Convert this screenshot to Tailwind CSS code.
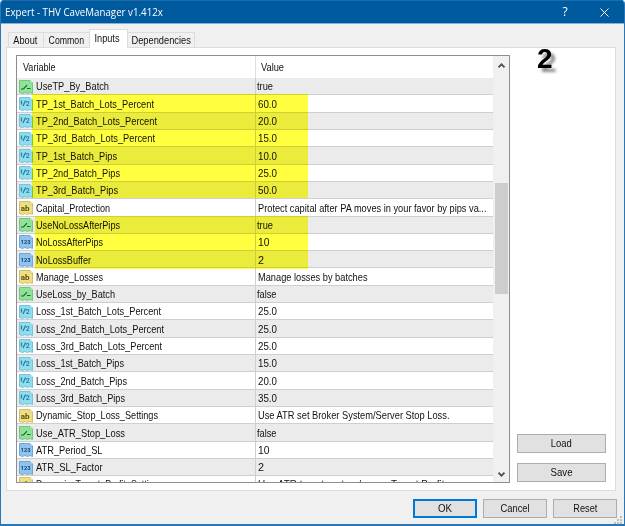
<!DOCTYPE html>
<html lang="en">
<head>
  <meta charset="UTF-8">
  <meta name="viewport" content="width=device-width, initial-scale=1.0">
  <title>Expert - THV CaveManager v1.412x</title>
  <script src="https://cdn.jsdelivr.net/npm/@tailwindcss/browser@4"></script>
</head>
<body class="bg-white overflow-hidden font-['Liberation_Sans',sans-serif] text-[11px] text-[#111]">
  <div class="relative w-[625px] h-[526px] flex flex-col bg-[#f0f0f0] border-l border-r border-b-2 border-[#2a77b8] rounded-t-[4px] overflow-hidden">
    <header class="h-6 shrink-0 bg-[#005a9e] border-t border-[#1a6eb0] border-b border-b-[#7fb2de] flex items-center text-white">
      <h1 class="pl-[4px] flex-1 font-['Open_Sans',sans-serif] text-[11px]"><span class="inline-block origin-left scale-x-[0.885]">Expert - THV CaveManager v1.412x</span></h1>
      <span class="w-[38px] text-center font-['Open_Sans',sans-serif] text-[12px]">?</span>
      <span class="w-[40px] flex justify-center">
        <svg class="w-[9px] h-[9px]" viewBox="0 0 9 9" fill="none" stroke="#fff" stroke-width="1"><path d="M.5 .5l8 8M8.5 .5l-8 8"/></svg>
      </span>
    </header>

    <nav class="relative z-10 flex items-end h-6 pl-[7px] shrink-0">
      <span class="h-4 w-[36px] border border-b-0 border-[#dcdcdc] flex items-center justify-center pr-[2px]"><span data-width="24">About</span></span>
      <span class="h-4 w-[45px] border-t border-[#dcdcdc] flex items-center justify-center"><span data-width="35.5">Common</span></span>
      <span class="h-[19px] w-[39px] bg-white border border-b-0 border-[#dcdcdc] flex items-center justify-center pb-0.5 pr-[3px]"><span data-width="25">Inputs</span></span>
      <span class="h-4 w-[67px] border border-l-0 border-b-0 border-[#dcdcdc] flex items-center justify-center"><span data-width="59.5">Dependencies</span></span>
    </nav>

    <main class="ml-[5px] w-[610px] h-[444px] shrink-0 -mt-px bg-white border border-[#dcdcdc] flex pt-[7px] pl-[9px]">
      <section class="relative w-[494px] h-[428px] border border-[#8b8e96] flex overflow-hidden">
        <div class="w-[476px] shrink-0">
          <div class="h-[22px] flex items-center">
            <span class="w-[239px] h-full pl-[6px] pt-px flex items-center border-r border-[#e0e0e0]"><span class="origin-left" data-width="32.5">Variable</span></span>
            <span class="pl-[5px] pt-px"><span class="inline-block origin-left" data-width="23">Value</span></span>
          </div>
          <div id="rows" class="h-[404px] overflow-hidden"></div>
        </div>
        <div class="w-[16px] shrink-0 bg-[#f0f0f0] flex flex-col items-center pt-[7px]">
          <svg class="w-[7px] h-[5px] shrink-0" viewBox="0 0 7 5" fill="none" stroke="#505050" stroke-width="1.8"><path d="M.5 4.3l3-3 3 3"/></svg>
          <div class="w-[13px] h-[111px] mt-[115px] bg-[#cdcdcd] shrink-0"></div>
          <svg class="w-[7px] h-[5px] mt-[178px] shrink-0" viewBox="0 0 7 5" fill="none" stroke="#505050" stroke-width="1.8"><path d="M.5 .7l3 3 3-3"/></svg>
        </div>
        <!-- marker pen over the changed inputs -->
        <div class="absolute left-[15px] top-[38px] w-[276px] h-[104px] bg-[#ffff40] mix-blend-multiply"></div>
        <div class="absolute left-[18px] top-[160px] w-[273px] h-[53px] bg-[#ffff40] mix-blend-multiply"></div>
      </section>
      <aside class="flex flex-col pl-[7px]">
        <div class="h-[379px] pl-[20px] -mt-[12px] mb-[12px] font-bold text-[28px] leading-[32px] text-black [text-shadow:4px_4px_3px_rgba(0,0,0,0.45)]">2</div>
        <button class="w-[89px] h-[19px] bg-[#e1e1e1] border border-[#adadad]"><span class="inline-block" data-width="21">Load</span></button>
        <button class="w-[89px] h-[19px] mt-[10px] bg-[#e1e1e1] border border-[#adadad]"><span class="inline-block" data-width="22">Save</span></button>
      </aside>
    </main>

    <footer class="flex gap-[6px] pl-[412px] pt-[8px]">
      <button class="w-[64px] h-[19px] bg-[#e1e1e1] border border-[#0078d7] outline outline-[#0078d7] -outline-offset-2"><span class="inline-block" data-width="14">OK</span></button>
      <button class="w-[64px] h-[19px] bg-[#e1e1e1] border border-[#adadad]"><span class="inline-block" data-width="29">Cancel</span></button>
      <button class="w-[64px] h-[19px] bg-[#e1e1e1] border border-[#adadad]"><span class="inline-block" data-width="24">Reset</span></button>
    </footer>
    <svg class="absolute right-0.5 bottom-0 w-2 h-2" viewBox="0 0 8 8" fill="#bfbfbf"><path d="M6 0h2v2H6zM3 3h2v2H3zM6 3h2v2H6zM0 6h2v2H0zM3 6h2v2H3zM6 6h2v2H6z"/></svg>
  </div>

  <svg class="hidden">
    <symbol id="icon-bool" viewBox="0 0 14 14">
      <path d="M.5 .5h10.5l2.5 2.5v10.5l-2.5-1-2.5 1-2.5-1-2.5 1-3-1z" fill="#90e29a" stroke="#6cc978"/>
      <path d="M11 .5v2.5h2.5" fill="#d9f7dc" stroke="#6cc978" stroke-width=".7"/>
      <path d="M2 9h2.5l3.5-3.8M8 8.5h3.5" fill="none" stroke="#176b2b" stroke-width="1.2"/>
    </symbol>
    <symbol id="icon-double" viewBox="0 0 14 14">
      <path d="M.5 .5h10.5l2.5 2.5v10.5l-2.5-1-2.5 1-2.5-1-2.5 1-3-1z" fill="#91dcee" stroke="#74c5d9"/>
      <path d="M11 .5v2.5h2.5" fill="#d9f4fb" stroke="#74c5d9" stroke-width=".7"/>
      <path d="M2.5 3.5v4M6.6 3.5l-2.6 5.5" fill="none" stroke="#2486a0" stroke-width="1.3"/>
      <text x="8.8" y="9.2" text-anchor="middle" font-family="Roboto" font-weight="bold" font-size="7" fill="#2486a0">2</text>
    </symbol>
    <symbol id="icon-string" viewBox="0 0 14 14">
      <path d="M.5 .5h10.5l2.5 2.5v10.5l-2.5-1-2.5 1-2.5-1-2.5 1-3-1z" fill="#eddf83" stroke="#d3c062"/>
      <path d="M11 .5v2.5h2.5" fill="#faf5d2" stroke="#d3c062" stroke-width=".7"/>
      <text x="6.2" y="10" text-anchor="middle" font-family="Roboto" font-weight="bold" font-size="8" fill="#5e4e12">ab</text>
    </symbol>
    <symbol id="icon-int" viewBox="0 0 14 14">
      <path d="M.5 .5h10.5l2.5 2.5v10.5l-2.5-1-2.5 1-2.5-1-2.5 1-3-1z" fill="#8fc4ee" stroke="#6da7d8"/>
      <path d="M11 .5v2.5h2.5" fill="#d8ebfa" stroke="#6da7d8" stroke-width=".7"/>
      <text x="6.6" y="9.2" text-anchor="middle" font-family="Roboto" font-weight="bold" font-size="5.6" fill="#123f73">123</text>
    </symbol>
  </svg>

  <script>
    // type, name, name width, value, value width
    const inputs = [
      ['bool', 'UseTP_By_Batch', 73, 'true', 16],
      ['double', 'TP_1st_Batch_Lots_Percent', 118, '60.0', 19],
      ['double', 'TP_2nd_Batch_Lots_Percent', 121, '20.0', 19],
      ['double', 'TP_3rd_Batch_Lots_Percent', 119, '15.0', 19],
      ['double', 'TP_1st_Batch_Pips', 81, '10.0', 19],
      ['double', 'TP_2nd_Batch_Pips', 84, '25.0', 19],
      ['double', 'TP_3rd_Batch_Pips', 82, '50.0', 19],
      ['string', 'Capital_Protection', 74, 'Protect capital after PA moves in your favor by pips va...', 229],
      ['bool', 'UseNoLossAfterPips', 84, 'true', 16],
      ['int', 'NoLossAfterPips', 67, '10', 11.5],
      ['int', 'NoLossBuffer', 55, '2', 6],
      ['string', 'Manage_Losses', 67, 'Manage losses by batches', 109.5],
      ['bool', 'UseLoss_by_Batch', 79, 'false', 19.5],
      ['double', 'Loss_1st_Batch_Lots_Percent', 125, '25.0', 19],
      ['double', 'Loss_2nd_Batch_Lots_Percent', 128, '25.0', 19],
      ['double', 'Loss_3rd_Batch_Lots_Percent', 126, '25.0', 19],
      ['double', 'Loss_1st_Batch_Pips', 88, '15.0', 19],
      ['double', 'Loss_2nd_Batch_Pips', 91, '20.0', 19],
      ['double', 'Loss_3rd_Batch_Pips', 89, '35.0', 19],
      ['string', 'Dynamic_Stop_Loss_Settings', 122, 'Use ATR set Broker System/Server Stop Loss.', 192],
      ['bool', 'Use_ATR_Stop_Loss', 89, 'false', 19.5],
      ['int', 'ATR_Period_SL', 66.5, '10', 11.5],
      ['int', 'ATR_SL_Factor', 66.5, '2', 6],
      ['string', 'Dynamic_Target_Profit_Settings', 127, 'Use ATR to set system/server Target Profit.', 190],
    ];
    document.getElementById('rows').innerHTML = inputs.map(([type, name, nameWidth, value, valueWidth]) => `
      <div class="h-[17.32px] flex items-center border-b border-[#cfcfcf] odd:bg-[#ebebeb] whitespace-nowrap last:h-[15.5px]">
        <span class="w-[239px] h-full shrink-0 flex items-center border-r border-[#cfcfcf] pl-0.5">
          <svg class="w-[14px] h-[14px] shrink-0 mr-[3px] mt-px"><use href="#icon-${type}"/></svg>
          <span class="pt-px origin-left" data-width="${nameWidth}">${name}</span>
        </span>
        <span class="${type === 'bool' ? 'pl-px' : 'pl-0.5'} pt-px"><span class="inline-block origin-left" data-width="${valueWidth}">${value}</span></span>
      </div>`).join('');

    // condense each label to its dialog font width
    const pen = document.createElement('canvas').getContext('2d');
    pen.font = '11px "Liberation Sans"';
    document.querySelectorAll('[data-width]').forEach((label) => {
      label.style.transform = `scaleX(${label.dataset.width / pen.measureText(label.textContent).width})`;
    });
  </script>
</body>
</html>
